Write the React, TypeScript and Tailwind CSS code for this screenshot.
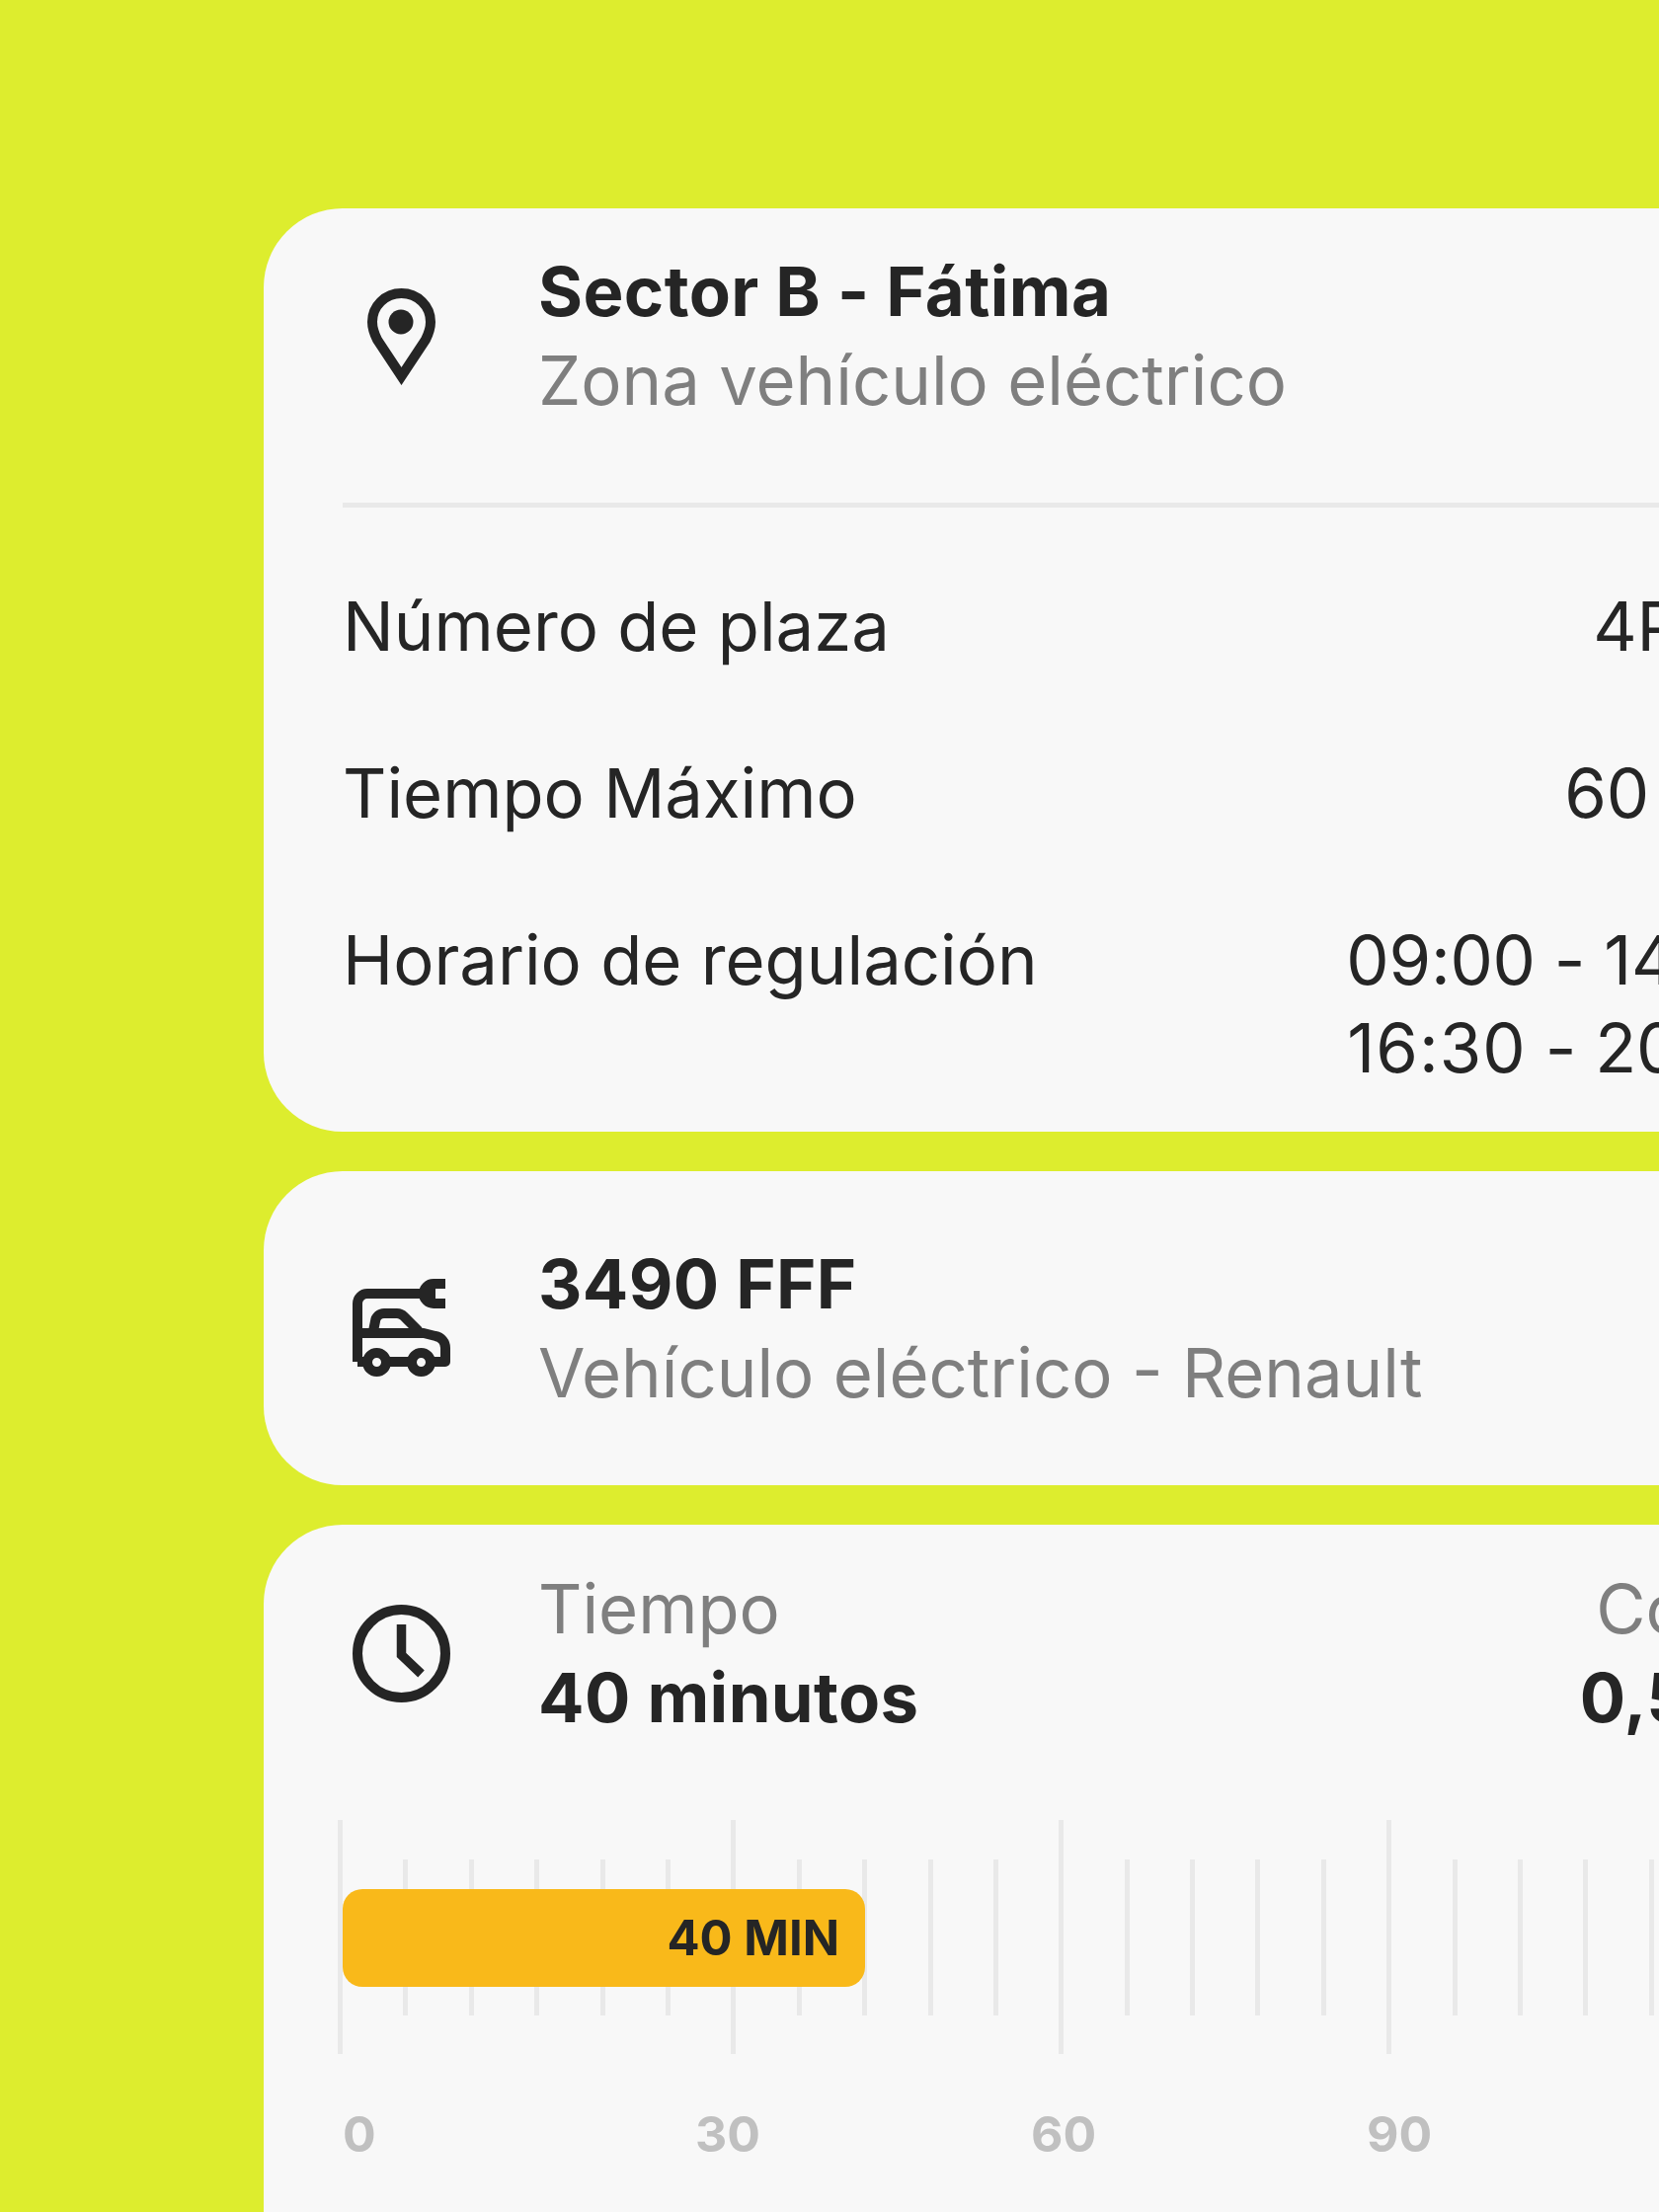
const ticks = Array.from({ length: 24 }, (_, i) => i)
const majorTicks = [0, 6, 11, 16, 21]

function PinIcon() {
  return (
    <svg className="-ml-0.5 mt-0.5" width="69" height="98" viewBox="0 0 69 98" fill="none">
      <path
        d="M34.5 5C18 5 5 18 5 34c0 6 2 12 5 18l24.5 37L59 52c3-6 5-12 5-18C64 18 51 5 34.5 5Z"
        stroke="#252525"
        strokeWidth="10"
      />
      <circle cx="34" cy="34" r="12.5" fill="#252525" />
    </svg>
  )
}

function CarIcon() {
  return (
    <svg width="100" height="100" viewBox="0 0 100 100" fill="none" stroke="#252525" strokeWidth="10" strokeLinejoin="round">
      <path d="M5 84V25a10 10 0 0 1 10-10h54" />
      <path d="M5 55h67l12 3a12 12 0 0 1 10 12v14H79" />
      <path d="M60 84H34M5 84h10" />
      <path d="M21 53l2-10a9 9 0 0 1 9-8h13a10 10 0 0 1 7 3l15 15" />
      <circle cx="24.5" cy="84.5" r="9.5" />
      <circle cx="69.5" cy="84.5" r="9.5" />
      <path d="M94 0H82a15 15 0 0 0 0 30h12V20H84V10h10Z" fill="#252525" stroke="none" />
    </svg>
  )
}

function ClockIcon() {
  return (
    <svg width="100" height="100" viewBox="0 0 100 100" fill="none" stroke="#252525" strokeWidth="10">
      <circle cx="49.5" cy="49.5" r="44.5" />
      <path d="M49.5 20v31l20 19" strokeWidth="9.5" />
    </svg>
  )
}

function InfoRow({ label, value }: { label: string; value: React.ReactNode }) {
  return (
    <div className="flex items-start justify-between">
      <span>{label}</span>
      <span className="whitespace-nowrap">{value}</span>
    </div>
  )
}

export default function App() {
  return (
    <div className="h-[2240px] w-[1680px] overflow-hidden bg-[#dded2e] pl-[267px] pt-[211px] font-['Inter',sans-serif] text-[#252525]">
      <div className="flex w-[1619px] flex-col gap-10">
        {/* Zone card */}
        <div className="h-[935px] rounded-[80px] bg-[#f8f8f8] px-20 pt-[39px]">
          <div className="flex items-center gap-[78px]">
            <div className="flex w-[120px] justify-center">
              <PinIcon />
            </div>
            <div className="text-[68.8px] leading-[90px]">
              <div className="font-bold tracking-[0.4px]">Sector B - Fátima</div>
              <div className="text-[#7f7f7f]">Zona vehículo eléctrico</div>
            </div>
          </div>
          <div className="mt-[79px] h-[5px] bg-[#e9e9e9]" />
          <div className="mt-[76px] flex flex-col gap-20 text-[68.8px] leading-[89px]">
            <InfoRow label="Número de plaza" value="4PNO" />
            <InfoRow label="Tiempo Máximo" value={<span className="tracking-[-0.2px]">60 min</span>} />
            <InfoRow
              label="Horario de regulación"
              value={
                <div className="tracking-[-0.25px]">
                  09:00 - 14:00
                  <br />
                  <span className="ml-[1px] tracking-[1px]">16:30</span> - 20:00
                </div>
              }
            />
          </div>
        </div>

        {/* Vehicle card */}
        <div className="flex h-[318px] items-center gap-[78px] rounded-[80px] bg-[#f8f8f8] px-20">
          <div className="flex w-[120px] justify-center">
            <CarIcon />
          </div>
          <div className="text-[68.8px] leading-[90px]">
            <div className="font-bold tracking-[0.4px]">3490 FFF</div>
            <div className="text-[#7f7f7f]">Vehículo eléctrico - Renault</div>
          </div>
        </div>

        {/* Time card */}
        <div className="h-[800px] rounded-[80px] bg-[#f8f8f8] px-20 pt-10">
          <div className="flex items-center justify-between">
            <div className="flex items-center gap-[78px]">
              <div className="mt-0.5 flex w-[120px] justify-center">
                <ClockIcon />
              </div>
              <div className="text-[68.8px] leading-[90px]">
                <div className="text-[#7f7f7f]">Tiempo</div>
                <div className="font-bold tracking-[0.4px]">40 minutos</div>
              </div>
            </div>
            <div className="text-right text-[68.8px] leading-[90px]">
              <div className="text-[#7f7f7f]">Coste</div>
              <div className="font-bold tracking-[0.4px]">0,50€</div>
            </div>
          </div>

          <div className="relative -ml-[5px] mt-[79px] flex h-[237px] items-center gap-[61.4px]">
            {ticks.map((i) => (
              <div
                key={i}
                className={
                  majorTicks.includes(i)
                    ? 'h-[237px] w-[5px] shrink-0 bg-[#e9e9e9]'
                    : 'h-[158px] w-[5px] shrink-0 bg-[#e9e9e9]'
                }
              />
            ))}
            <div className="absolute left-[5px] top-[70px] flex h-[99px] w-[529px] items-center justify-end rounded-[20px] bg-[#f9b91a] pr-[26px] text-[49px] font-bold">
              40 MIN
            </div>
          </div>

          <div className="mt-[50px] flex text-[50px] font-bold leading-[62px] text-[#c0c0c0]">
            <div className="w-[357px]">0</div>
            <div className="w-[340px]">30</div>
            <div className="w-[340px]">60</div>
            <div>90</div>
          </div>
        </div>
      </div>
    </div>
  )
}
